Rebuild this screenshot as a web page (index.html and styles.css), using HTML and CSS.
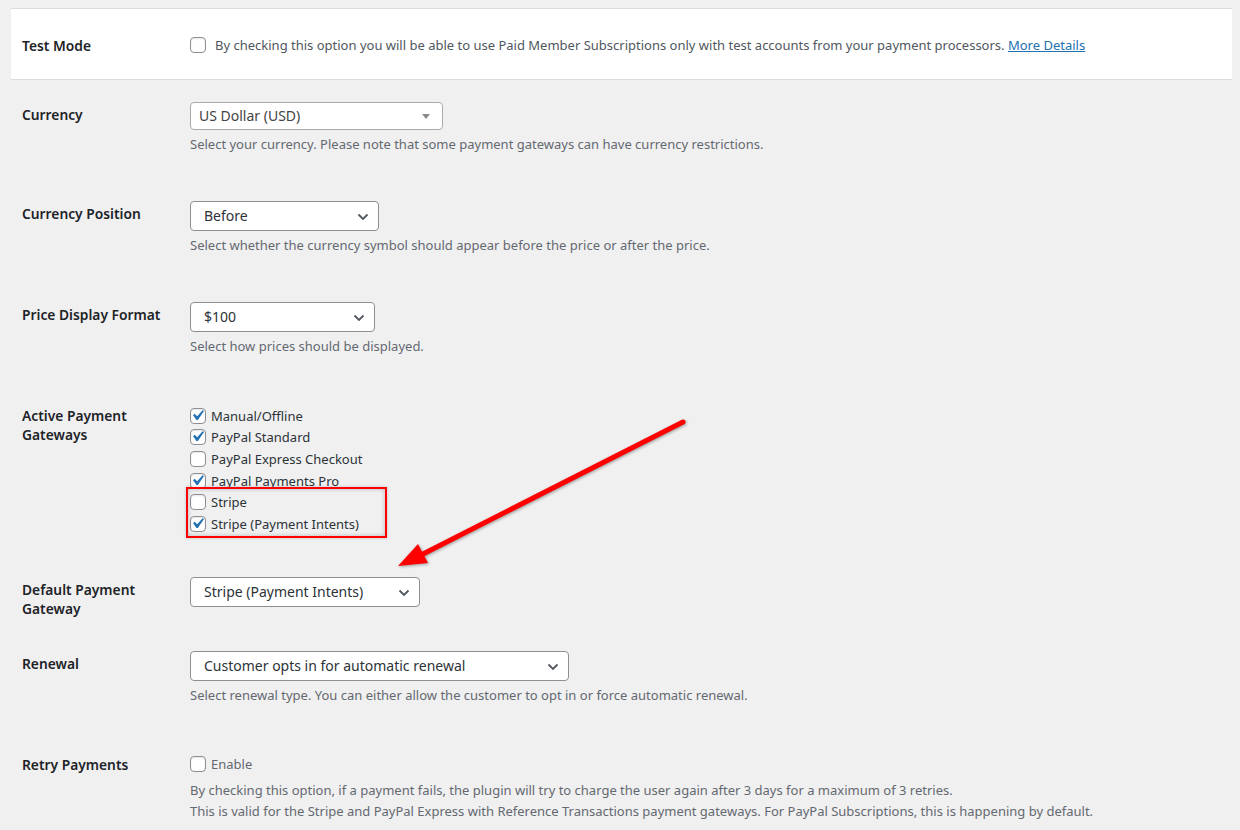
FILE: index.html
```html
<!DOCTYPE html>
<html lang="en">

<head>
  <meta charset="UTF-8">
  <title>Payments Settings</title>
  <link rel="stylesheet" href="styles.css">
</head>

<body>
  <div class="page">
    <div class="test-box">
      <div class="label">Test Mode</div>
      <div class="field">
        <label class="check check-test"><span class="box"></span><span>By checking this option you will be able to use Paid Member Subscriptions only with test accounts from your payment processors. <a href="#">More Details</a></span></label>
      </div>
    </div>

    <div class="row row-currency">
      <div class="label">Currency</div>
      <div class="field">
        <div class="select2">US Dollar (USD)<span class="tri"></span></div>
        <p class="desc">Select your currency. Please note that some payment gateways can have currency restrictions.</p>
      </div>
    </div>

    <div class="row row-next">
      <div class="label">Currency Position</div>
      <div class="field">
        <div class="select w-position">Before
          <svg class="chev" width="12" height="8" viewBox="0 0 12 8"><path d="M1.5 1.5 6 6l4.5-4.5" /></svg>
        </div>
        <p class="desc">Select whether the currency symbol should appear before the price or after the price.</p>
      </div>
    </div>

    <div class="row row-next">
      <div class="label">Price Display Format</div>
      <div class="field">
        <div class="select w-price">$100
          <svg class="chev" width="12" height="8" viewBox="0 0 12 8"><path d="M1.5 1.5 6 6l4.5-4.5" /></svg>
        </div>
        <p class="desc">Select how prices should be displayed.</p>
      </div>
    </div>

    <div class="row row-gateways">
      <div class="label label-flush">Active Payment<br>Gateways</div>
      <div class="field gateways">
        <label class="check"><span class="box checked"><svg viewBox="0 0 20 20"><path d="M14.83 4.89l1.34.94-5.81 8.38H9.02L5.78 9.67l1.34-1.25 2.57 2.4z" /></svg></span>Manual/Offline</label>
        <label class="check"><span class="box checked"><svg viewBox="0 0 20 20"><path d="M14.83 4.89l1.34.94-5.81 8.38H9.02L5.78 9.67l1.34-1.25 2.57 2.4z" /></svg></span>PayPal Standard</label>
        <label class="check"><span class="box"></span>PayPal Express Checkout</label>
        <label class="check"><span class="box checked"><svg viewBox="0 0 20 20"><path d="M14.83 4.89l1.34.94-5.81 8.38H9.02L5.78 9.67l1.34-1.25 2.57 2.4z" /></svg></span>PayPal Payments Pro</label>
        <label class="check"><span class="box"></span>Stripe</label>
        <label class="check"><span class="box checked"><svg viewBox="0 0 20 20"><path d="M14.83 4.89l1.34.94-5.81 8.38H9.02L5.78 9.67l1.34-1.25 2.57 2.4z" /></svg></span>Stripe (Payment Intents)</label>
        <div class="highlight"></div>
      </div>
    </div>

    <div class="row row-default">
      <div class="label">Default Payment<br>Gateway</div>
      <div class="field">
        <div class="select w-default">Stripe (Payment Intents)
          <svg class="chev" width="12" height="8" viewBox="0 0 12 8"><path d="M1.5 1.5 6 6l4.5-4.5" /></svg>
        </div>
      </div>
    </div>

    <div class="row row-renewal">
      <div class="label">Renewal</div>
      <div class="field">
        <div class="select w-renewal">Customer opts in for automatic renewal
          <svg class="chev" width="12" height="8" viewBox="0 0 12 8"><path d="M1.5 1.5 6 6l4.5-4.5" /></svg>
        </div>
        <p class="desc">Select renewal type. You can either allow the customer to opt in or force automatic renewal.</p>
      </div>
    </div>

    <div class="row row-retry">
      <div class="label label-flush">Retry Payments</div>
      <div class="field">
        <label class="check check-muted"><span class="box"></span>Enable</label>
        <p class="desc desc-retry">By checking this option, if a payment fails, the plugin will try to charge the user again after 3 days for a maximum of 3 retries.<br>This is valid for the Stripe and PayPal Express with Reference Transactions payment gateways. For PayPal Subscriptions, this is happening by default.</p>
      </div>
    </div>

    <svg class="arrow" width="1240" height="830" viewBox="0 0 1240 830">
      <line x1="683" y1="422" x2="421" y2="555" />
      <polygon points="398,566 418,544 428,563" />
    </svg>
  </div>
</body>

</html>
```

FILE: styles.css
```css
* {
  box-sizing: border-box;
}

body {
  margin: 0;
  padding: 0;
  background: #f0f0f1;
  font-family: 'Noto Sans', 'Liberation Sans', sans-serif;
  font-size: 13px;
  color: #3c434a;
}

.page {
  position: relative;
  height: 830px;
  padding-top: 8px;
  overflow: hidden;
}

.test-box {
  display: flex;
  align-items: center;
  height: 72px;
  margin-left: 11px;
  width: 1221px;
  padding: 1px 0 0 11px;
  background: white;
  border-top: 1px solid #dcdcde;
  border-bottom: 1px solid #dcdcde;
}

.row {
  display: flex;
  align-items: flex-start;
  margin-left: 11px;
  padding-left: 11px;
}

.label {
  width: 168px;
  flex-shrink: 0;
  padding-top: 3px;
  font-weight: 600;
  font-size: 13.8px;
  line-height: 19px;
  color: #1d2327;
}

.test-box .label {
  padding-top: 2px;
}

.label-flush {
  padding-top: 1px;
}

.field {
  position: relative;
}

.row-currency {
  margin-top: 22px;
}

.row-next {
  margin-top: 47px;
}

.row-gateways {
  margin-top: 49px;
}

.row-default {
  margin-top: 42px;
}

.row-renewal {
  margin-top: 33px;
}

.row-retry {
  margin-top: 49px;
}

/* checkboxes */
.check {
  display: flex;
  align-items: center;
  height: 21.6px;
  color: #2c3338;
  font-size: 13px;
}

.check-test {
  color: #50575e;
}

.check-muted {
  color: #646970;
}

.box {
  position: relative;
  width: 16px;
  height: 16px;
  flex-shrink: 0;
  margin-right: 5px;
  background: white;
  border: 1px solid #8c8f94;
  border-radius: 4px;
  box-shadow: inset 0 1px 2px rgba(0, 0, 0, 0.1);
}

.check-test .box {
  margin-right: 9px;
}

.box svg {
  position: absolute;
  top: -4px;
  left: -4px;
  width: 21px;
  height: 21px;
  fill: #2271b1;
}

a {
  color: #2271b1;
  text-decoration: underline;
}

/* selects */
.select2 {
  position: relative;
  width: 253px;
  height: 28px;
  padding-left: 8px;
  line-height: 26px;
  font-size: 14px;
  color: #444;
  background: white;
  border: 1px solid #aaa;
  border-radius: 4px;
}

.tri {
  position: absolute;
  right: 12px;
  top: 11px;
  border-style: solid;
  border-width: 5px 4px 0 4px;
  border-color: #888 transparent transparent transparent;
}

.select {
  position: relative;
  height: 30px;
  padding-left: 13px;
  line-height: 28px;
  font-size: 14px;
  color: #2c3338;
  background: white;
  border: 1px solid #8c8f94;
  border-radius: 4px;
}

.chev {
  position: absolute;
  right: 9px;
  top: 11px;
  fill: none;
  stroke: #50575e;
  stroke-width: 1.8;
}

.w-position {
  width: 189px;
}

.w-price {
  width: 185px;
}

.w-default {
  width: 230px;
}

.w-renewal {
  width: 379px;
}

.desc {
  margin: 4px 0 0;
  line-height: 20px;
  font-size: 13px;
  color: #646970;
}

.desc-retry {
  margin-top: 5px;
  line-height: 21px;
}

/* annotations */
.highlight {
  position: absolute;
  left: -4px;
  top: 82px;
  width: 201px;
  height: 51px;
  border: 2px solid #f00;
  box-shadow: inset 0 0 4px rgba(0, 0, 0, 0.25), 0 0 3px rgba(0, 0, 0, 0.2);
}

.arrow {
  position: absolute;
  left: 0;
  top: 0;
  pointer-events: none;
  filter: drop-shadow(1px 1px 1.5px rgba(0, 0, 0, 0.35));
}

.arrow line {
  stroke: #f00;
  stroke-width: 5;
  stroke-linecap: round;
}

.arrow polygon {
  fill: #f00;
}
```
